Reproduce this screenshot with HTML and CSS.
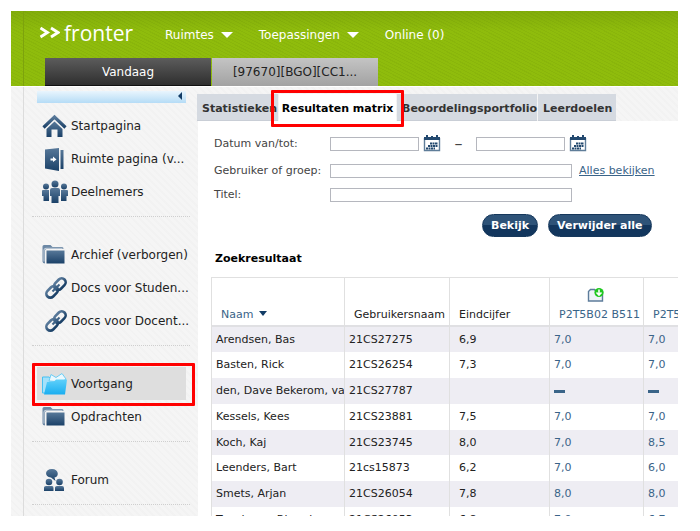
FILE: index.html
```html
<!DOCTYPE html>
<html lang="nl">
<head>
<meta charset="utf-8">
<meta name="viewport" content="width=device-width, initial-scale=1">
<title>Fronter – Resultaten matrix</title>
<link rel="stylesheet" href="styles.css">
</head>
<body>
<svg class="defs" width="0" height="0" aria-hidden="true">
  <defs>
    <linearGradient id="blue" x1="0" y1="0" x2="0" y2="1"><stop offset="0" stop-color="#577899"/><stop offset="1" stop-color="#1b4168"/></linearGradient>
    <linearGradient id="cyan" x1="0" y1="0" x2="0" y2="1"><stop offset="0" stop-color="#5fd0fa"/><stop offset="1" stop-color="#1aaef0"/></linearGradient>
    <symbol id="i-folder" viewBox="0 0 26 26">
      <path d="M.5 19.500V4.500Q.5 3 2 3H8.500L10.500 5H20Q21.500 5 21.500 7H4.500Q3 7 3 8.500V21.500Q.5 21.500.5 19.500Z" fill="#6c88a5"/>
      <path d="M2 19.500V8Q2 6.300 4 6.300H20.500" fill="none" stroke="#dfe6ec" stroke-width=".8"/>
      <path d="M4.500 8.500H22.500V21.500H4.500Z" fill="url(#blue)"/>
    </symbol>
    <symbol id="i-link" viewBox="0 0 26 26">
      <g transform="rotate(-45 14 13)" fill="none" stroke="url(#blue)" stroke-width="2.600">
        <rect x="2" y="9" width="13" height="8" rx="4"/>
        <rect x="13" y="9" width="13" height="8" rx="4"/>
        <path d="M9 13H19" stroke="#3e6287" stroke-width="2"/>
      </g>
    </symbol>
    <symbol id="i-cal" viewBox="0 0 18 18">
      <path d="M1.500 3V15.500H16.500V3" fill="#fff" stroke="#5f7d99" stroke-width="1.400"/>
      <path d="M1 2H17V5H1Z" fill="#23496f"/><path d="M4 0V3M14 0V3M9 1V3" stroke="#23496f" stroke-width="2"/>
      <path d="M7 8.500H15M5 11H15M3 13.500H12" stroke="#23496f" stroke-width="2" stroke-dasharray="2 .5"/>
    </symbol>
  </defs>
</svg>
<div class="frame">
  <header class="top">
    <div class="bar">
      <a class="logo" href="#"><svg width="21" height="14" viewBox="0 0 21 14" aria-hidden="true"><path d="M1.500 2 8.500 6.500 1.500 11M12 2 19 6.500 12 11" fill="none" stroke="#fff" stroke-width="2.800"/></svg><span>fronter</span></a>
      <nav class="menu">
        <a href="#">Ruimtes <i class="caret"></i></a>
        <a href="#">Toepassingen <i class="caret"></i></a>
        <a href="#">Online (0)</a>
      </nav>
    </div>
    <nav class="rooms">
      <a class="room current" href="#">Vandaag</a>
      <a class="room" href="#">[97670][BGO][CC1...</a>
    </nav>
  </header>
  <div class="body">
    <aside class="side">
      <button class="collapse" type="button" aria-label="Menu inklappen"><i></i></button>
      <ul>
        <li><a href="#"><svg viewBox="0 0 26 26"><path d="M1.500 14.500 12.500 4 23.500 14.500" fill="none" stroke="url(#blue)" stroke-width="3.200"/><path d="M12.500 8.500 20.500 16V24H15.500V16.500H9.500V24H4.500V16Z" fill="url(#blue)"/></svg>Startpagina</a></li>
        <li><a href="#"><svg viewBox="0 0 26 26"><path d="M3 3.500 17 2V25L3 22.500Z" fill="url(#blue)"/><path d="M18.500 4H21.500V23H18.500Z" fill="url(#blue)"/><path d="M8.500 12.500H11V10.500L14.500 13.500 11 16V14.500H8.500Z" fill="#fff"/></svg>Ruimte pagina (v...</a></li>
        <li><a href="#"><svg viewBox="0 0 26 26" fill="url(#blue)"><circle cx="4" cy="7.500" r="3"/><circle cx="22" cy="7.500" r="3"/><path d="M0 12Q0 11 1 11H7V22H1.500V17H0ZM26 12Q26 11 25 11H19V22H24.500V17H26Z"/><circle cx="13" cy="5" r="3.500"/><path d="M8 11Q8 9 10 9H16Q18 9 18 11V17H16.500V24H9.500V17H8Z"/></svg>Deelnemers</a></li>
      </ul>
      <ul>
        <li><a href="#"><svg><use href="#i-folder"/></svg>Archief (verborgen)</a></li>
        <li><a href="#"><svg><use href="#i-link"/></svg>Docs voor Studen...</a></li>
        <li><a href="#"><svg><use href="#i-link"/></svg>Docs voor Docent...</a></li>
      </ul>
      <ul>
        <li class="active"><a href="#"><svg viewBox="0 0 26 26"><path d="M.5 22V6H7L9 8H20V22Z" fill="#a5e1fa" stroke="#45c1f3"/><path d="M7 10 9 3.500 14 6.500 20 2.500 24 8 20 11Z" fill="#eaf8fe" stroke="#6bcdf5"/><path d="M2 23.500 5 11 12 10.500 14 8.500H25L23 23.500Z" fill="url(#cyan)"/></svg>Voortgang</a></li>
        <li><a href="#"><svg><use href="#i-folder"/></svg>Opdrachten</a></li>
      </ul>
      <ul>
        <li><a href="#"><svg viewBox="0 0 26 26" fill="url(#blue)"><path d="M10 2C17 2 17.500 10 12.500 10.500L13.500 14 9 10.500C2 10 2.500 2 10 2Z"/><circle cx="7" cy="15" r="3.300"/><circle cx="17.500" cy="15" r="3.300"/><path d="M2 24V20.500Q2 19 4 19H10Q11.500 19 11.500 21V24ZM13 24V20.500Q13 19 15 19H20Q22 19 22 21V24Z"/></svg>Forum</a></li>
      </ul>
    </aside>
    <main>
      <nav class="tabs">
        <a class="t1" href="#">Statistieken</a>
        <a class="t2 on" href="#">Resultaten matrix</a>
        <a class="t3" href="#">Beoordelingsportfolio</a>
        <a class="t4" href="#">Leerdoelen</a>
      </nav>
      <div class="panel">
        <form>
          <div class="row first">
            <label for="van">Datum van/tot:</label>
            <input class="date" id="van" type="text">
            <button class="cal" type="button" aria-label="Kies begindatum"><svg width="18" height="18"><use href="#i-cal"/></svg></button>
            <label class="dash" for="tot">–</label>
            <input class="date" id="tot" type="text">
            <button class="cal" type="button" aria-label="Kies einddatum"><svg width="18" height="18"><use href="#i-cal"/></svg></button>
          </div>
          <div class="row second">
            <label for="groep">Gebruiker of groep:</label>
            <input class="wide" id="groep" type="text">
            <a href="#">Alles bekijken</a>
          </div>
          <div class="row">
            <label for="titel">Titel:</label>
            <input class="wide" id="titel" type="text">
          </div>
          <div class="actions">
            <button class="pill" type="submit">Bekijk</button>
            <button class="pill" type="reset">Verwijder alle</button>
          </div>
        </form>
        <h2>Zoekresultaat</h2>
        <table>
          <colgroup><col class="c-name"><col class="c-id"><col class="c-end"><col class="c-g"><col class="c-g"></colgroup>
          <thead><tr>
            <th><a href="#">Naam <i class="sort"></i></a></th><th>Gebruikersnaam</th><th class="end">Eindcijfer</th>
            <th><a href="#"><svg class="add" width="18" height="16" viewBox="0 0 18 16"><path d="M1.500 14V4.500L3.500 2.500H7.500L9 4.500H15.500V14Z" fill="#eef3f8" stroke="#5d7c9b" stroke-width="1.400"/><circle cx="12" cy="5.500" r="4.600" fill="#1fc81f"/><path d="M12 2.500V8M9.500 5.500 12 8 14.500 5.500" stroke="#fff" stroke-width="1.600" fill="none"/></svg>P2T5B02 B511</a></th><th><a href="#">P2T5</a></th>
          </tr></thead>
          <tbody>
            <tr><td>Arendsen, Bas</td><td>21CS27275</td><td class="end">6,9</td><td class="g">7,0</td><td class="g">7,0</td></tr>
            <tr><td>Basten, Rick</td><td>21CS26254</td><td class="end">7,3</td><td class="g">7,0</td><td class="g">7,0</td></tr>
            <tr><td>den, Dave Bekerom, va</td><td>21CS27787</td><td class="end"></td><td class="g"><i class="none"></i></td><td class="g"><i class="none"></i></td></tr>
            <tr><td>Kessels, Kees</td><td>21CS23881</td><td class="end">7,5</td><td class="g">7,0</td><td class="g">7,0</td></tr>
            <tr><td>Koch, Kaj</td><td>21CS23745</td><td class="end">8,0</td><td class="g">7,0</td><td class="g">8,5</td></tr>
            <tr><td>Leenders, Bart</td><td>21cs15873</td><td class="end">6,2</td><td class="g">7,0</td><td class="g">6,0</td></tr>
            <tr><td>Smets, Arjan</td><td>21CS26054</td><td class="end">7,8</td><td class="g">8,0</td><td class="g">8,0</td></tr>
            <tr><td>Teunissen, Rhandy</td><td>21CS26053</td><td class="end">6,8</td><td class="g">7,0</td><td class="g">6,7</td></tr>
          </tbody>
        </table>
      </div>
    </main>
  </div>
</div>
</body>
</html>
```
FILE: styles.css
```css
* { box-sizing: border-box; }
body { margin: 0; background: #fff; color: #222; font: 11px/16px "DejaVu Sans", Verdana, sans-serif; }
a { color: inherit; text-decoration: none; }
button, input { font: inherit; margin: 0; padding: 0; }
ul { list-style: none; margin: 0; padding: 0; }
.defs { position: absolute; }

.frame { margin: 11px 22px 15px 11px; height: calc(100vh - 26px); overflow: hidden; display: flex; flex-direction: column; }

.top {
  height: 76px; flex: none; border-bottom: 1px solid #fff;
  background:
    linear-gradient(90deg, transparent 12px, #7da30c 12px, #7da30c 13px, transparent 13px),
    linear-gradient(rgba(50, 80, 0, .14), transparent 20px),
    repeating-linear-gradient(27deg, rgba(70, 100, 0, .08) 0 1px, transparent 1px 3px),
    #8fbc0c;
}
.bar { height: 47px; display: flex; align-items: center; padding-left: 28px; color: #fff; }
.logo { width: 126px; display: flex; align-items: center; gap: 4px; padding-bottom: 4px; font: 500 21px/28px "Open Sans", sans-serif; }
.menu { display: flex; gap: 26px; font-size: 12px; }
.menu a { display: flex; align-items: center; gap: 7px; }
.caret { border: 6px solid transparent; border-top-color: #fff; border-bottom: 0; }
.rooms { display: flex; gap: 1px; padding-left: 34px; }
.room { width: 166px; height: 28px; line-height: 28px; text-align: center; font-size: 12px; color: #222; background: linear-gradient(#c4c4c4, #a2a2a2); }
.room.current { color: #fff; background: linear-gradient(#5c5c5c, #2f2f2f); border-bottom: 1px solid #111; }

.body {
  flex: 1; min-height: 0; display: flex;
  background:
    linear-gradient(90deg, transparent 12px, #dcdcdc 12px, #dcdcdc 13px, transparent 13px),
    repeating-linear-gradient(45deg, rgba(0, 0, 0, .012) 0 2px, transparent 2px 5px),
    #f5f5f5;
}
.side { width: 187px; flex: none; padding: 4px 8px 0 21px; font-size: 12px; }
.collapse { display: flex; justify-content: flex-end; align-items: center; width: 149px; height: 12px; margin-left: 5px; padding: 0 4px 2px; border: 0; background: linear-gradient(#e9f5fd, #b5dcf6); }
.collapse i { border: 4px solid transparent; border-right-color: #123c66; border-left: 0; }
.side ul { padding: 21px 4px 8px 5px; border-bottom: 1px dotted #cfcfcf; }
.side .collapse + ul { padding-top: 6px; }
.side li { position: relative; }
.side li a { display: flex; align-items: center; gap: 3px; height: 33px; padding-left: 5px; white-space: nowrap; }
.side svg { width: 26px; height: 26px; flex: none; }
.side .active { background: #dedede; }
.side .active::after { content: ""; position: absolute; inset: -4px -9px -6px -5px; border: 3px solid #f00; border-radius: 1px; z-index: 2; pointer-events: none; }

main { flex: 1; min-width: 0; padding-top: 7px; }
.tabs { display: flex; gap: 1px; margin-left: -1px; font-weight: bold; color: #333; }
.tabs a { position: relative; height: 27px; padding-left: 5px; line-height: 29px; white-space: nowrap; background: #d5dae1; border-bottom: 1px solid #c9ced6; }
.t1 { width: 81px; }
.t2 { width: 117px; }
.t3 { width: 140px; }
.t4 { width: 78px; }
.tabs .on { padding: 0; text-align: center; color: #000; background: #fff; border-color: #fff; }
.tabs .on::after { content: ""; position: absolute; inset: -4px -8px -7px; border: 3px solid #f00; border-radius: 1px; z-index: 2; pointer-events: none; }
.panel { background: #fff; padding: 12px 0 0 13px; min-height: 100%; }

form { margin-left: 3px; color: #444; }
.row { display: flex; align-items: center; height: 24px; }
.row label:first-child { width: 116px; flex: none; white-space: nowrap; }
.row input { height: 14px; border: 1px solid #b5b7be; background: #fff; border-radius: 0; }
.first { height: 25px; padding-bottom: 3px; }
.second { height: 25px; }
.date { width: 89px; }
.wide { width: 242px; }
.cal { width: 18px; height: 18px; margin-left: 4px; border: 0; background: none; }
.cal svg { display: block; }
.dash { width: 35px; text-align: center; font-size: 16px; }
.row a { margin-left: 7px; color: #3a6488; text-decoration: underline; white-space: nowrap; }
.actions { display: flex; gap: 10px; margin: 7px 0 0 268px; }
.pill { height: 23px; padding: 0 8px; border: 1px solid #16385c; border-radius: 12px; color: #fff; font-weight: bold; white-space: nowrap; background: linear-gradient(#2e5378 50%, #12365d 50%); }
h2 { margin: 14px 0 10px 4px; font-size: 11px; line-height: 16px; color: #000; }

table { table-layout: fixed; width: 526px; border-collapse: separate; border-spacing: 0; border-left: 1px solid #e0e0e0; border-top: 1px solid #e0e0e0; }
.c-name { width: 133px; }
.c-id { width: 105px; }
.c-end { width: 100px; }
.c-g { width: 94px; }
th { height: 49px; padding: 0 0 2px 9px; font-weight: normal; text-align: left; vertical-align: bottom; white-space: nowrap; border-right: 1px solid #e0e0e0; border-bottom: 2px solid #e0e0e3; }
th a, .g { color: #3a6488; }
.add { display: block; margin: 0 0 4px 28px; }
.sort { display: inline-block; margin: 0 0 2px 2px; border: 4px solid transparent; border-top: 5px solid #123c66; border-bottom: 0; }
td { height: 26px; padding: 0 4px; white-space: nowrap; overflow: hidden; border-right: 1px solid #e0e0e0; }
td.end { padding-left: 9px; }
tbody tr:nth-child(odd) { background: #eeedf3; }
tbody tr:nth-child(4n+1) td { height: 25px; }
.none { display: block; width: 11px; height: 3px; background: #3a6488; }
```
